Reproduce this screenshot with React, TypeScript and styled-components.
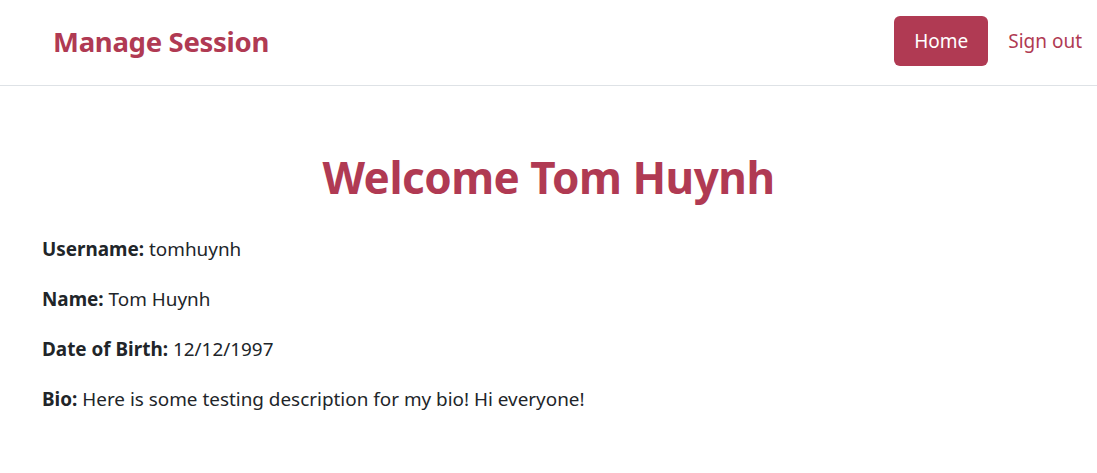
import React from "react";
import styled, { createGlobalStyle } from "styled-components";

const Global = createGlobalStyle`
  html, body { margin: 0; padding: 0; background: #fff; }
  body { font-family: "Noto Sans", "Open Sans", sans-serif; color: #212529; }
`;

const NavBar = styled.nav`
  display: flex;
  align-items: center;
  justify-content: space-between;
  height: 86px;
  box-sizing: border-box;
  border-bottom: 1px solid #dee2e6;
  padding: 0 15px 3px 53px;
`;

const Brand = styled.a`
  font-size: 27.5px;
  font-weight: 700;
  color: #b03a53;
  text-decoration: none;
  letter-spacing: -0.3px;
`;

const NavLinks = styled.div`
  display: flex;
  align-items: center;
  gap: 20px;
`;

const NavLink = styled.a<{ $active?: boolean }>`
  display: flex;
  align-items: center;
  justify-content: center;
  height: 50px;
  box-sizing: border-box;
  padding: ${(p) => (p.$active ? "0 20px" : "0")};
  border-radius: 6px;
  font-size: 19px;
  color: ${(p) => (p.$active ? "#fff" : "#b03a53")};
  background: ${(p) => (p.$active ? "#b03a53" : "transparent")};
  text-decoration: none;
`;

const Main = styled.main`
  padding: 59px 42px 0;
`;

const Title = styled.h1`
  margin: 0 0 28px;
  text-align: center;
  font-size: 44px;
  line-height: 64px;
  font-weight: 700;
  color: #b03a53;
  letter-spacing: -0.5px;
`;

const Field = styled.p`
  margin: 0 0 26px;
  font-size: 18.9px;
  line-height: 24px;
`;

const Label = styled.b`
  font-weight: 700;
`;

const fields: [string, string][] = [
  ["Username:", "tomhuynh"],
  ["Name:", "Tom Huynh"],
  ["Date of Birth:", "12/12/1997"],
  ["Bio:", "Here is some testing description for my bio! Hi everyone!"],
];

export default function App() {
  return (
    <>
      <Global />
      <NavBar>
        <Brand href="#">Manage Session</Brand>
        <NavLinks>
          <NavLink $active href="#">Home</NavLink>
          <NavLink href="#">Sign out</NavLink>
        </NavLinks>
      </NavBar>
      <Main>
        <Title>Welcome Tom Huynh</Title>
        {fields.map(([k, v]) => (
          <Field key={k}>
            <Label>{k}</Label> {v}
          </Field>
        ))}
      </Main>
    </>
  );
}
